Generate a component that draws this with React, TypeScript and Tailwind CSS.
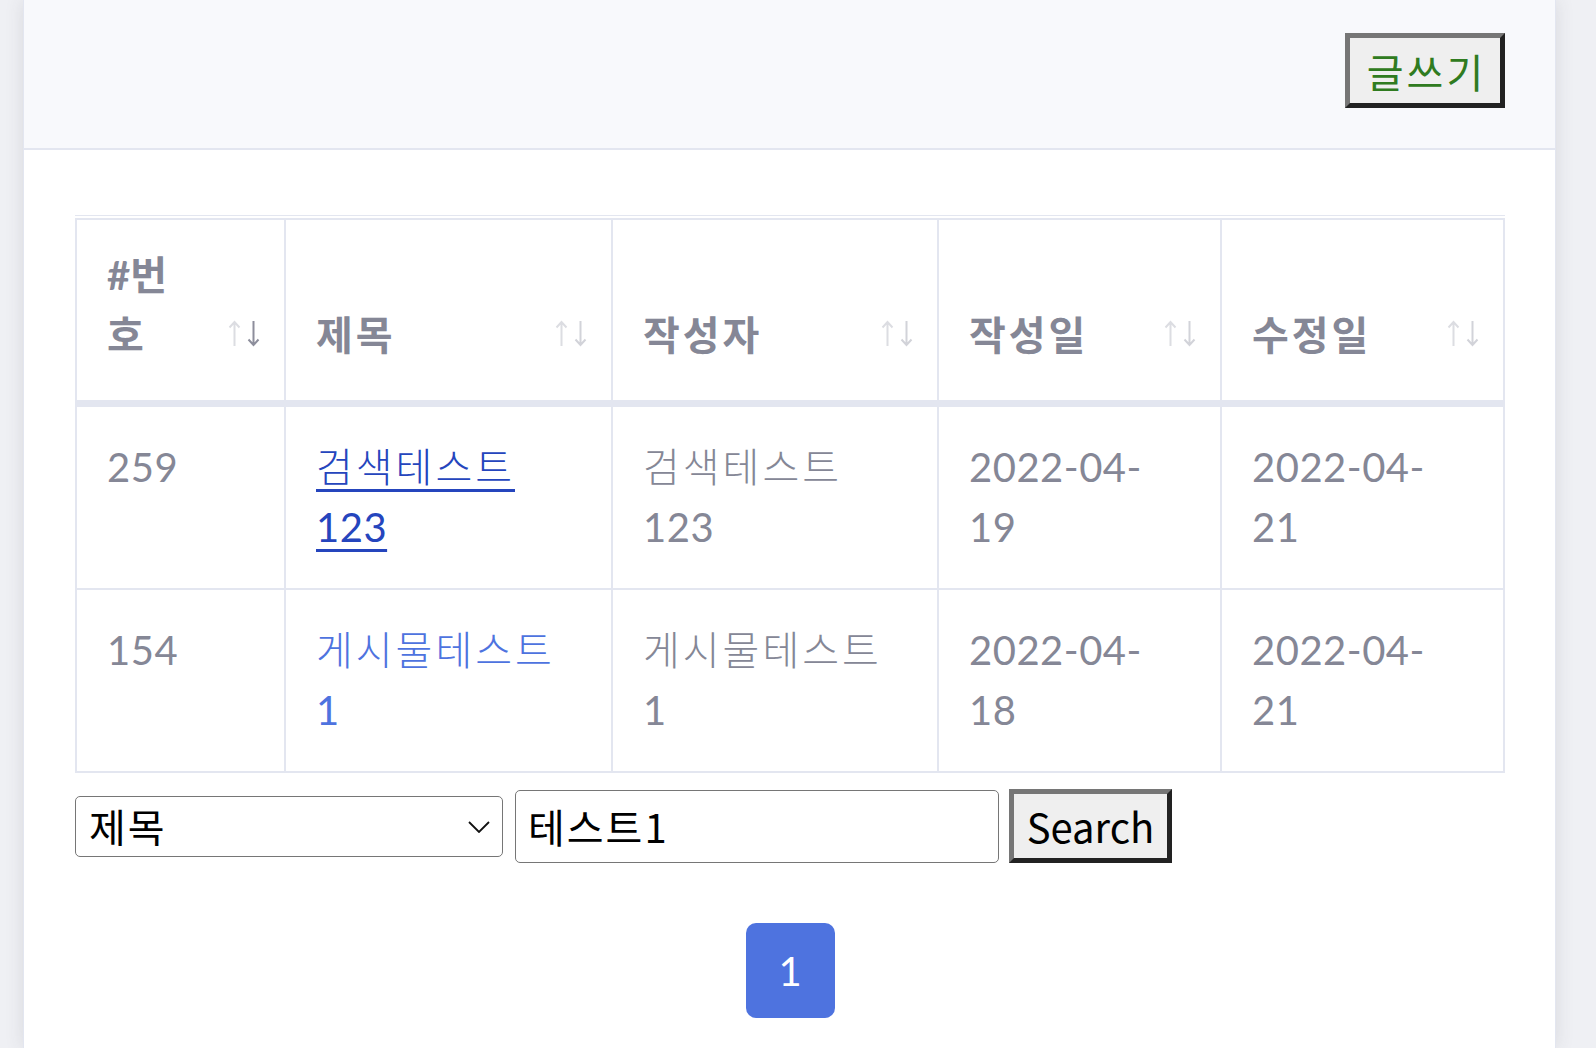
import type { ReactNode } from 'react'

interface Post {
  id: number
  title: string
  writer: string
  created: string
  updated: string
  visited?: boolean
}

const posts: Post[] = [
  { id: 259, title: '검색테스트', writer: '검색테스트', created: '2022-04-19', updated: '2022-04-21', visited: true },
  { id: 154, title: '게시물테스트', writer: '게시물테스트', created: '2022-04-18', updated: '2022-04-21' },
]

const titleSuffix: Record<number, string> = { 259: '123', 154: '1' }

function SortArrows({ active }: { active?: boolean }) {
  return (
    <div className="absolute right-[24px] bottom-[53px] flex gap-[6px]">
      <svg width="13" height="27" viewBox="0 0 13 27" className="text-[#dcdde2]">
        <path d="M6.5 26V2M1.5 7.5L6.5 2l5 5.5" fill="none" stroke="currentColor" strokeWidth="2" />
      </svg>
      <svg
        width="13"
        height="27"
        viewBox="0 0 13 27"
        className={active ? 'text-[#8d8e9c]' : 'text-[#d2d3d9]'}
      >
        <path d="M6.5 1v24M1.5 19.5l5 5.5 5-5.5" fill="none" stroke="currentColor" strokeWidth="2" />
      </svg>
    </div>
  )
}

function Ko({ children, light }: { children: ReactNode; light?: boolean }) {
  return <span className={`tracking-[3px] ${light ? 'font-light' : ''}`}>{children}</span>
}

function Th({ children, width, last, active }: { children: ReactNode; width: string; last?: boolean; active?: boolean }) {
  return (
    <th
      className={`relative ${width} align-bottom text-left font-bold border-t-2 border-l-2 border-b-[5px] border-[#e3e6f0] pl-[30px] pr-[75px] pt-[25px] pb-[35px] ${
        last ? 'border-r-2' : ''
      }`}
    >
      {children}
      <SortArrows active={active} />
    </th>
  )
}

function Td({ children, last, bottom }: { children: ReactNode; last?: boolean; bottom?: boolean }) {
  return (
    <td
      className={`align-top border-t-2 border-l-2 border-[#e3e6f0] px-[30px] pt-[30px] pb-[31px] ${last ? 'border-r-2' : ''} ${
        bottom ? 'border-b-2' : ''
      }`}
    >
      {children}
    </td>
  )
}

function SplitDate({ value }: { value: string }) {
  // 2022-04- / 19
  return (
    <span className="tracking-[0.5px]">
      {value.slice(0, 8)}
      <br />
      {value.slice(8)}
    </span>
  )
}

export default function App() {
  return (
    <div className="min-h-screen bg-[#eff0f4] font-['Lato','Noto_Sans_CJK_KR',sans-serif]">
      <div className="ml-[23px] w-[1533px] min-h-screen bg-white border-x border-[#e3e6f0] shadow-[0_0_18px_rgba(58,59,69,0.12)]">
        {/* card header */}
        <div className="h-[150px] bg-[#f8f9fc] border-b-2 border-[#e3e6f0] flex justify-end pt-[33px] pr-[50px]">
          <button className="h-[75px] w-[160px] bg-[#efefef] border-[5px] border-t-[#767676] border-l-[#767676] border-r-[#222222] border-b-[#222222] text-[40px] leading-none tracking-[3px] pl-[3px] text-[#2f7b20] font-['Noto_Sans_CJK_KR',sans-serif]">
            글쓰기
          </button>
        </div>

        {/* card body */}
        <div className="pl-[51px] pr-[50px] pt-[65px]">
          <div className="w-[1430px] border-t border-[#e3e6f0] pt-[2px]">
            <table className="w-[1430px] table-fixed border-separate border-spacing-0 text-[40px] leading-[60px] text-[#858796]">
              <thead>
                <tr>
                  <Th width="w-[209px]" active>
                    #<Ko>번</Ko>
                    <br />
                    <Ko>호</Ko>
                  </Th>
                  <Th width="w-[327px]">
                    <Ko>제목</Ko>
                  </Th>
                  <Th width="w-[326px]">
                    <Ko>작성자</Ko>
                  </Th>
                  <Th width="w-[283px]">
                    <Ko>작성일</Ko>
                  </Th>
                  <Th width="w-[285px]" last>
                    <Ko>수정일</Ko>
                  </Th>
                </tr>
              </thead>
              <tbody>
                {posts.map((post, i) => {
                  const bottom = i === posts.length - 1
                  return (
                    <tr key={post.id}>
                      <Td bottom={bottom}>
                        <span className="tracking-[0.5px]">{post.id}</span>
                      </Td>
                      <Td bottom={bottom}>
                        <a
                          href="#"
                          className={
                            post.visited
                              ? 'text-[#2545bd] underline decoration-[3px] underline-offset-[7px]'
                              : 'text-[#4e73df]'
                          }
                        >
                          <Ko light>{post.title}</Ko>
                          <br />
                          <span className="tracking-[0.5px]">{titleSuffix[post.id]}</span>
                        </a>
                      </Td>
                      <Td bottom={bottom}>
                        <Ko light>{post.writer}</Ko>
                        <br />
                        <span className="tracking-[0.5px]">{titleSuffix[post.id]}</span>
                      </Td>
                      <Td bottom={bottom}>
                        <SplitDate value={post.created} />
                      </Td>
                      <Td bottom={bottom} last>
                        <SplitDate value={post.updated} />
                      </Td>
                    </tr>
                  )
                })}
              </tbody>
            </table>
          </div>

          {/* search */}
          <div className="mt-[16px] flex items-center font-['Noto_Sans_CJK_KR',sans-serif] text-[40px] text-black">
            <div className="relative">
              <select
                defaultValue="title"
                className="appearance-none w-[428px] h-[61px] border border-[#767676] rounded-[5px] bg-white pl-[13px] leading-none tracking-[2px]"
              >
                <option value="title">제목</option>
                <option value="writer">작성자</option>
                <option value="content">내용</option>
              </select>
              <svg
                width="22"
                height="12"
                viewBox="0 0 22 12"
                className="pointer-events-none absolute right-[13px] top-[25px]"
              >
                <path d="M1 1l10 10L21 1" fill="none" stroke="#111" strokeWidth="1.8" />
              </svg>
            </div>
            <input
              defaultValue="테스트1"
              className="ml-[12px] w-[484px] h-[73px] border border-[#767676] rounded-[5px] bg-white px-[12px] outline-none tracking-[2px]"
            />
            <button className="ml-[10px] w-[163px] h-[74px] bg-[#efefef] border-[5px] border-t-[#767676] border-l-[#767676] border-r-[#222222] border-b-[#222222] leading-none">
              Search
            </button>
          </div>

          {/* pagination */}
          <div className="mt-[60px] flex justify-center">
            <button className="w-[89px] h-[95px] rounded-[10px] bg-[#4e73df] text-white text-[40px] leading-none">
              1
            </button>
          </div>
        </div>
      </div>
    </div>
  )
}
